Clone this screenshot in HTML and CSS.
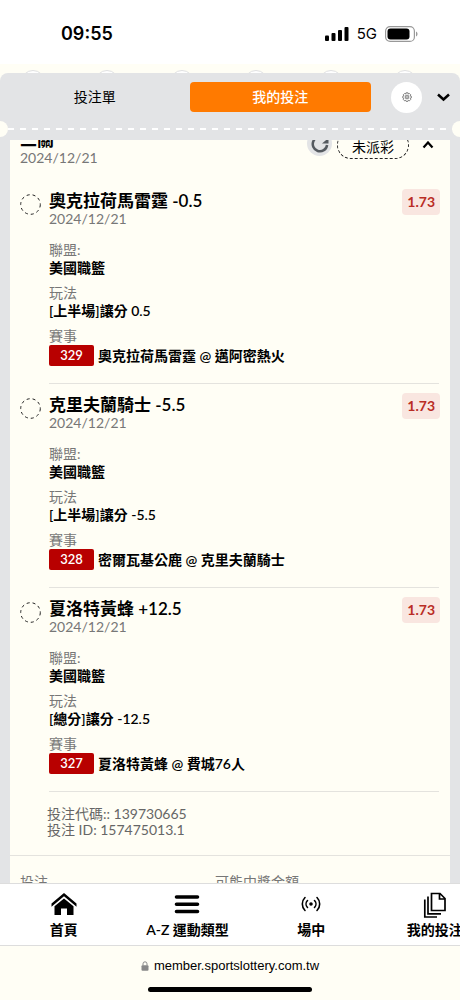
FILE: index.html
```html
<!DOCTYPE html>
<html lang="zh-Hant">
<head>
  <meta charset="UTF-8">
  <title>我的投注</title>
  <meta name="viewport" content="width=device-width, initial-scale=1.0">
  <link rel="stylesheet" href="styles.css">
</head>
<body>
  <div class="status">
    <span class="time">09:55</span>
    <div class="status-right">
      <svg width="24" height="16" viewBox="0 0 24 16">
        <rect x="0" y="9.500" width="4" height="5.500" rx="1"/>
        <rect x="6.500" y="7" width="4" height="8" rx="1"/>
        <rect x="13" y="4" width="4" height="11" rx="1"/>
        <rect x="19.500" y="1" width="4" height="14" rx="1"/>
      </svg>
      <span>5G</span>
      <svg width="33" height="16" viewBox="0 0 33 16">
        <rect x="0.600" y="0.600" width="28.800" height="14.800" rx="4.500" fill="none" stroke="#999" stroke-width="1.200"/>
        <rect x="2.500" y="2.500" width="22" height="11" rx="3"/>
        <path d="M31 5.500v5c2-.8 2-4.200 0-5z" fill="#999"/>
      </svg>
    </div>
  </div>

  <div class="sports">
    <i></i><i></i><i></i><i></i><i></i><i></i>
  </div>

  <main class="panel">
    <div class="panel-head">
      <div class="tabs">
        <button class="tab">投注單</button>
        <button class="tab active">我的投注</button>
      </div>
      <button class="gear" aria-label="設定">
        <svg width="10" height="10" viewBox="0 0 24 24" fill="none" stroke="#555" stroke-width="1.800" stroke-linejoin="round">
          <path d="M9.500 2h5l.8 2.800 2.500-1.200 3 3-1.200 2.600 2.600.8v4.500l-2.600 1 1.200 2.600-3 3-2.600-1.200-1 2.500H9.800l-1-2.500-2.600 1.200-3-3 1.200-2.600L2 14.500V10l2.400-.8-1.200-2.600 3-3 2.500 1.200z"/>
          <circle cx="12" cy="12" r="4.500"/>
          <circle cx="12" cy="12" r="1"/>
        </svg>
      </button>
      <button class="fold" aria-label="收合">
        <svg width="13" height="9" viewBox="0 0 13 9" fill="none" stroke="#000" stroke-width="2.500"><path d="M1 1.500l5.500 5 5.500-5"/></svg>
      </button>
    </div>
    <div class="tear"></div>

    <section class="ticket">
      <header class="ticket-head">
        <div class="ticket-name">
          <h1>二關</h1>
          <p class="date">2024/12/21</p>
        </div>
        <button class="refresh" aria-label="重新整理">
          <svg width="18" height="18" viewBox="0 0 18 18" fill="none" stroke="#555a60" stroke-width="2.500">
            <path d="M13.500 3.500a7.200 7.200 0 1 0 2.600 6.500"/>
            <path d="M17.500 3v5.500h-6.500z" fill="#555a60" stroke="none"/>
          </svg>
        </button>
        <span class="state">未派彩</span>
        <button class="fold" aria-label="收合投注">
          <svg width="12" height="8" viewBox="0 0 12 8" fill="none" stroke="#000" stroke-width="2.200"><path d="M1.500 6.500l4.500-5 4.500 5"/></svg>
        </button>
      </header>

      <article class="leg">
        <svg class="mark" viewBox="0 0 21 21"><circle cx="10.500" cy="10.500" r="9.800"/></svg>
        <div class="leg-body">
          <h2>奧克拉荷馬雷霆 -0.5</h2>
          <p class="date">2024/12/21</p>
          <dl>
            <dt>聯盟:</dt>
            <dd>美國職籃</dd>
            <dt>玩法</dt>
            <dd>[上半場]讓分 0.5</dd>
            <dt>賽事</dt>
            <dd class="match"><span class="no">329</span>奧克拉荷馬雷霆 @ 邁阿密熱火</dd>
          </dl>
          <span class="odds">1.73</span>
        </div>
      </article>

      <article class="leg">
        <svg class="mark" viewBox="0 0 21 21"><circle cx="10.500" cy="10.500" r="9.800"/></svg>
        <div class="leg-body">
          <h2>克里夫蘭騎士 -5.5</h2>
          <p class="date">2024/12/21</p>
          <dl>
            <dt>聯盟:</dt>
            <dd>美國職籃</dd>
            <dt>玩法</dt>
            <dd>[上半場]讓分 -5.5</dd>
            <dt>賽事</dt>
            <dd class="match"><span class="no">328</span>密爾瓦基公鹿 @ 克里夫蘭騎士</dd>
          </dl>
          <span class="odds">1.73</span>
        </div>
      </article>

      <article class="leg">
        <svg class="mark" viewBox="0 0 21 21"><circle cx="10.500" cy="10.500" r="9.800"/></svg>
        <div class="leg-body">
          <h2>夏洛特黃蜂 +12.5</h2>
          <p class="date">2024/12/21</p>
          <dl>
            <dt>聯盟:</dt>
            <dd>美國職籃</dd>
            <dt>玩法</dt>
            <dd>[總分]讓分 -12.5</dd>
            <dt>賽事</dt>
            <dd class="match"><span class="no">327</span>夏洛特黃蜂 @ 費城76人</dd>
          </dl>
          <span class="odds">1.73</span>
        </div>
      </article>

      <div class="codes">
        <p>投注代碼:: 139730665</p>
        <p>投注 ID: 157475013.1</p>
      </div>
      <div class="totals">
        <span>投注</span>
        <span>可能中獎金額</span>
      </div>
    </section>
  </main>

  <nav class="menu">
    <a href="#">
      <svg width="26" height="24" viewBox="0 0 26 24">
        <path d="M0.500 11.500L13 1l12.500 10.500v3.200L13 4.300 0.500 14.700z"/>
        <path d="M3.500 14.200L13 6.500l9.500 7.700V23H16v-6.500h-6V23H3.500z"/>
      </svg>
      首頁
    </a>
    <a href="#">
      <svg width="26" height="24" viewBox="0 0 26 24" stroke="#000" stroke-width="3.600" stroke-linecap="round"><path d="M2.500 5h21M2.500 12.200h21M2.500 19.500h21"/></svg>
      A-Z 運動類型
    </a>
    <a href="#">
      <svg width="20" height="24" viewBox="0 0 20 24" fill="none" stroke="#000" stroke-width="1.600" stroke-linecap="round">
        <circle cx="10" cy="12" r="1" fill="#000"/>
        <path d="M6.500 8.500a5 5 0 0 0 0 7M13.500 8.500a5 5 0 0 1 0 7M4 5.500a9.200 9.200 0 0 0 0 13M16 5.500a9.200 9.200 0 0 1 0 13"/>
      </svg>
      場中
    </a>
    <a href="#">
      <svg width="24" height="26" viewBox="0 0 24 26" fill="none" stroke="#000" stroke-width="1.700">
        <path d="M8.500 1.500h8.500l5 5v12H8.500zM16.500 1.500v5.500H22"/>
        <path d="M5 4.500v17.300h13M1.800 7.500V25H14"/>
      </svg>
      我的投注
    </a>
  </nav>

  <footer class="address">
    <div class="url">
      <svg width="8" height="10" viewBox="0 0 8 10">
        <rect x="0.500" y="4.200" width="7" height="5.500" rx="1" fill="#888"/>
        <path d="M2 4.500V2.800a2 2 0 0 1 4 0v1.700" fill="none" stroke="#888"/>
      </svg>
      member.sportslottery.com.tw
    </div>
    <div class="home-bar"></div>
  </footer>
</body>
</html>
```
FILE: styles.css
```css
* {
  box-sizing: border-box;
}

body {
  margin: 0;
  height: 100vh;
  display: flex;
  flex-direction: column;
  overflow: hidden;
  background: #fffef5;
  color: #000;
  font-family: Lato, "Noto Sans CJK TC", sans-serif;
  font-size: 14px;
  line-height: 18px;
}

h1, h2, p, dl, dd {
  margin: 0;
}

button {
  border: 0;
  padding: 0;
  background: none;
  font: inherit;
  color: inherit;
}

svg {
  display: block;
}

/* Barra de estado */
.status {
  flex: none;
  display: flex;
  align-items: center;
  justify-content: space-between;
  height: 64px;
  padding: 4px 42px 0 61px;
  background: #fff;
  font-family: Inter, sans-serif;
}

.time {
  font-size: 18px;
  font-weight: 600;
}

.status-right {
  display: flex;
  align-items: center;
  gap: 8px;
  font-size: 15px;
  font-weight: 400;
}

.sports {
  flex: none;
  display: flex;
  justify-content: space-between;
  height: 9px;
  padding: 6px 43px 0 21px;
}

.sports i {
  width: 24px;
  height: 24px;
  border: 1px solid #dfe0e1;
  border-radius: 50%;
  background: #fff;
}

/* Panel */
.panel {
  flex: 1;
  min-height: 0;
  display: flex;
  flex-direction: column;
  position: relative;
  background: #e3e4e6;
  border-radius: 8px 8px 0 0;
}

.panel-head {
  flex: none;
  display: flex;
  align-items: center;
  height: 48px;
  padding: 0 10px 0 4px;
}

.tabs {
  flex: 1;
  display: grid;
  grid-template-columns: 1fr 1fr;
  gap: 4px;
}

.tab {
  height: 30px;
  border-radius: 4px;
}

.tab.active {
  background: #ff7a00;
  color: #fff;
  font-weight: 500;
}

.gear {
  display: grid;
  place-items: center;
  width: 31px;
  height: 31px;
  margin: 0 15px 0 20px;
  border-radius: 50%;
  background: #fff;
}

.tear {
  flex: none;
  position: relative;
  height: 19px;
  overflow: hidden;
  background: repeating-linear-gradient(90deg, #fff 0 6px, transparent 6px 12px) 8px 7px / 100% 2px no-repeat;
}

.tear::before,
.tear::after {
  content: "";
  position: absolute;
  top: 0;
  width: 16px;
  height: 16px;
  border-radius: 50%;
  background: #fffef5;
}

.tear::before {
  left: -8px;
}

.tear::after {
  right: -8px;
}

.ticket {
  flex: 1;
  min-height: 0;
  margin: 0 10px;
  overflow: hidden;
  background: #fffef5;
}

.ticket-head {
  display: flex;
  height: 52px;
  margin-top: -12px;
  padding: 3px 16px 0 10px;
}

.ticket-name {
  flex: 1;
}

h1, h2 {
  font-size: 17px;
  font-weight: 600;
  line-height: 18px;
}

.date {
  color: #777;
}

.refresh {
  display: grid;
  place-items: center;
  width: 25px;
  height: 25px;
  border-radius: 50%;
  background: #e3e4e6;
}

.state {
  width: 72px;
  height: 28px;
  margin: 0 13px 0 5px;
  border: 1px dashed #222;
  border-radius: 14px;
  line-height: 30px;
  text-align: center;
}

.ticket-head .fold {
  height: 28px;
}

.leg {
  display: flex;
  gap: 8px;
  padding: 0 11px 0 10px;
}

.mark {
  flex: none;
  width: 21px;
  height: 21px;
  margin-top: 14px;
  fill: none;
  stroke: #222;
  stroke-dasharray: 3 3;
}

.leg-body {
  flex: 1;
  position: relative;
  padding: 12px 0 17px;
  border-bottom: 1px solid #e4e3de;
}

.odds {
  position: absolute;
  top: 9px;
  right: -1px;
  padding: 4px 5px;
  border-radius: 4px;
  background: #f9e6e0;
  color: #b92d25;
  font-weight: 700;
}

dl {
  margin-top: 13px;
}

dt {
  color: #777;
}

dd {
  font-weight: 600;
}

dd + dt {
  margin-top: 7px;
}

.match {
  display: flex;
  gap: 4px;
  line-height: 21px;
}

.no {
  width: 45px;
  border-radius: 2px;
  background: #b80000;
  color: #fff;
  font-size: 13px;
  text-align: center;
}

.codes {
  padding: 14px 37px 17px;
  color: #666;
  line-height: 16px;
}

.totals {
  display: grid;
  grid-template-columns: 195px 1fr;
  padding: 17px 10px;
  border-top: 1px solid #e4e3de;
  color: #777;
}

/* Menú inferior */
.menu {
  flex: none;
  display: flex;
  height: 62px;
  padding-left: 2px;
  overflow: hidden;
  border-top: 1px solid #ddd;
  background: #fff;
}

.menu a {
  flex: 0 0 27%;
  display: flex;
  flex-direction: column;
  align-items: center;
  justify-content: space-between;
  padding: 8px 0 6px;
  color: #000;
  font-weight: 600;
  text-decoration: none;
}

.address {
  flex: none;
  height: 55px;
  padding-top: 11px;
  border-top: 1px solid #ddd;
}

.url {
  display: flex;
  align-items: center;
  justify-content: center;
  gap: 5px;
  font-family: "Liberation Sans", Arial, sans-serif;
  font-size: 13px;
}

.home-bar {
  width: 164px;
  height: 5px;
  margin: 12px auto 0;
  border-radius: 3px;
  background: #000;
}
```
